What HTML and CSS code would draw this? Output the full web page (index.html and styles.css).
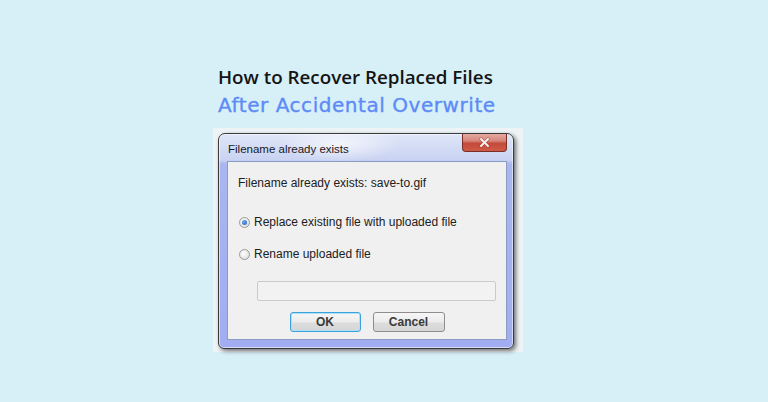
FILE: index.html
```html
<!DOCTYPE html>
<html>
<head>
<meta charset="utf-8">
<link rel="stylesheet" href="styles.css">
</head>
<body>
<div class="page">
  <div class="title1">How to Recover Replaced Files</div>
  <div class="title2">After Accidental Overwrite</div>
  <div class="shot">
    <div class="window">
      <div class="titlebar">
        <span class="wtitle">Filename already exists</span>
        <div class="close"><svg width="13" height="11" viewBox="0 0 13 11"><path d="M3 2 L10 9 M10 2 L3 9" stroke="#9a3a30" stroke-width="3.2" stroke-linecap="round" opacity="0.5"/><path d="M3 2 L10 9 M10 2 L3 9" stroke="#f2eeee" stroke-width="2" stroke-linecap="round"/></svg></div>
      </div>
      <div class="panel">
        <div class="msg">Filename already exists: save-to.gif</div>
        <div class="row row1"><span class="radio checked"></span><span>Replace existing file with uploaded file</span></div>
        <div class="row row2"><span class="radio"></span><span>Rename uploaded file</span></div>
        <div class="field"></div>
        <div class="buttons">
          <div class="btn ok">OK</div>
          <div class="btn">Cancel</div>
        </div>
      </div>
    </div>
  </div>
</div>
</body>
</html>
```
FILE: styles.css
```css
html, body {
  margin: 0;
  padding: 0;
}
body {
  width: 768px;
  height: 402px;
  overflow: hidden;
  background: #d7eff7;
}
.page {
  display: flex;
  flex-direction: column;
  align-items: flex-start;
  padding: 63px 0 0 218px;
}
.title1 {
  font-family: "Open Sans", "DejaVu Sans", sans-serif;
  font-weight: 600;
  font-size: 18.8px;
  line-height: 28px;
  color: #141414;
}
.title2 {
  font-family: "DejaVu Sans", sans-serif;
  font-size: 20px;
  letter-spacing: 0.55px;
  line-height: 29px;
  color: #5d8bf6;
  -webkit-text-stroke: 0.35px #5d8bf6;
}
.shot {
  margin: 8px 0 0 -5px;
  width: 310px;
  height: 224px;
  box-sizing: border-box;
  padding: 5px 0 0 5px;
  background: #eef4f6;
}
.window {
  width: 296px;
  height: 216px;
  box-sizing: border-box;
  border: 1px solid #3a3a3a;
  border-radius: 7px 7px 6px 6px;
  background:
    radial-gradient(ellipse 60px 18px at 120px 10px, rgba(255,255,255,0.7), rgba(255,255,255,0) 100%),
    linear-gradient(to bottom, #dfe6f8 0px, #c9d3f2 26px, #aab6ef 30px, #a1adf0 100%);
  box-shadow: inset 0 0 0 1px rgba(255,255,255,0.55), 2px 2px 4px rgba(0,0,0,0.55);
  display: flex;
  flex-direction: column;
}
.titlebar {
  height: 27px;
  display: flex;
  align-items: flex-start;
  justify-content: space-between;
}
.wtitle {
  font-family: "Liberation Sans", Arial, sans-serif;
  font-size: 11.5px;
  color: #181822;
  margin: 9px 0 0 9px;
}
.close {
  width: 45px;
  height: 18px;
  box-sizing: border-box;
  margin: 0 6px 0 0;
  border: 1px solid #7a2e24;
  border-top: none;
  border-radius: 0 0 4px 4px;
  background: linear-gradient(to bottom, #e4a9a0 0%, #d8867c 40%, #c44a3a 55%, #cf5a46 100%);
  display: flex;
  align-items: center;
  justify-content: center;
}
.panel {
  flex: 1;
  margin: 0 6px 8px 8px;
  background: #f0f0f0;
  border: 1px solid #8c9bc2;
  display: flex;
  flex-direction: column;
  align-items: flex-start;
  font-family: "Liberation Sans", Arial, sans-serif;
  font-size: 12px;
  color: #202020;
}
.msg {
  margin: 13px 0 0 10px;
  line-height: 16px;
}
.row {
  display: flex;
  align-items: center;
  gap: 4px;
  line-height: 16px;
  padding-left: 11px;
}
.row1 { margin-top: 23px; }
.row2 { margin-top: 16px; }
.radio {
  width: 11px;
  height: 11px;
  box-sizing: border-box;
  border-radius: 50%;
  border: 1px solid #9a9a9a;
  background: radial-gradient(circle at 40% 40%, #ffffff 0%, #e6e6e6 60%, #cfcfcf 100%);
  display: flex;
  align-items: center;
  justify-content: center;
}
.radio.checked::after {
  content: "";
  width: 5px;
  height: 5px;
  border-radius: 50%;
  background: radial-gradient(circle at 40% 35%, #6aa8ec, #1d5cb4);
}
.field {
  margin: 19px 0 0 29px;
  width: 239px;
  height: 20px;
  box-sizing: border-box;
  border: 1px solid #cacaca;
  border-radius: 2px;
  background: #f2f2f2;
}
.buttons {
  align-self: stretch;
  display: flex;
  justify-content: center;
  gap: 12px;
  margin-top: 11px;
}
.btn {
  width: 72px;
  height: 20px;
  box-sizing: border-box;
  border: 1px solid #8d8d8d;
  border-radius: 3px;
  background: linear-gradient(to bottom, #f6f6f6 0%, #ececec 50%, #dcdcdc 55%, #d6d6d6 100%);
  font-weight: bold;
  font-size: 12px;
  color: #3a3a3a;
  display: flex;
  align-items: center;
  justify-content: center;
}
.btn.ok {
  width: 71px;
  border-color: #3ba3dc;
  box-shadow: inset 0 0 0 1px #aee0f7;
}
```
